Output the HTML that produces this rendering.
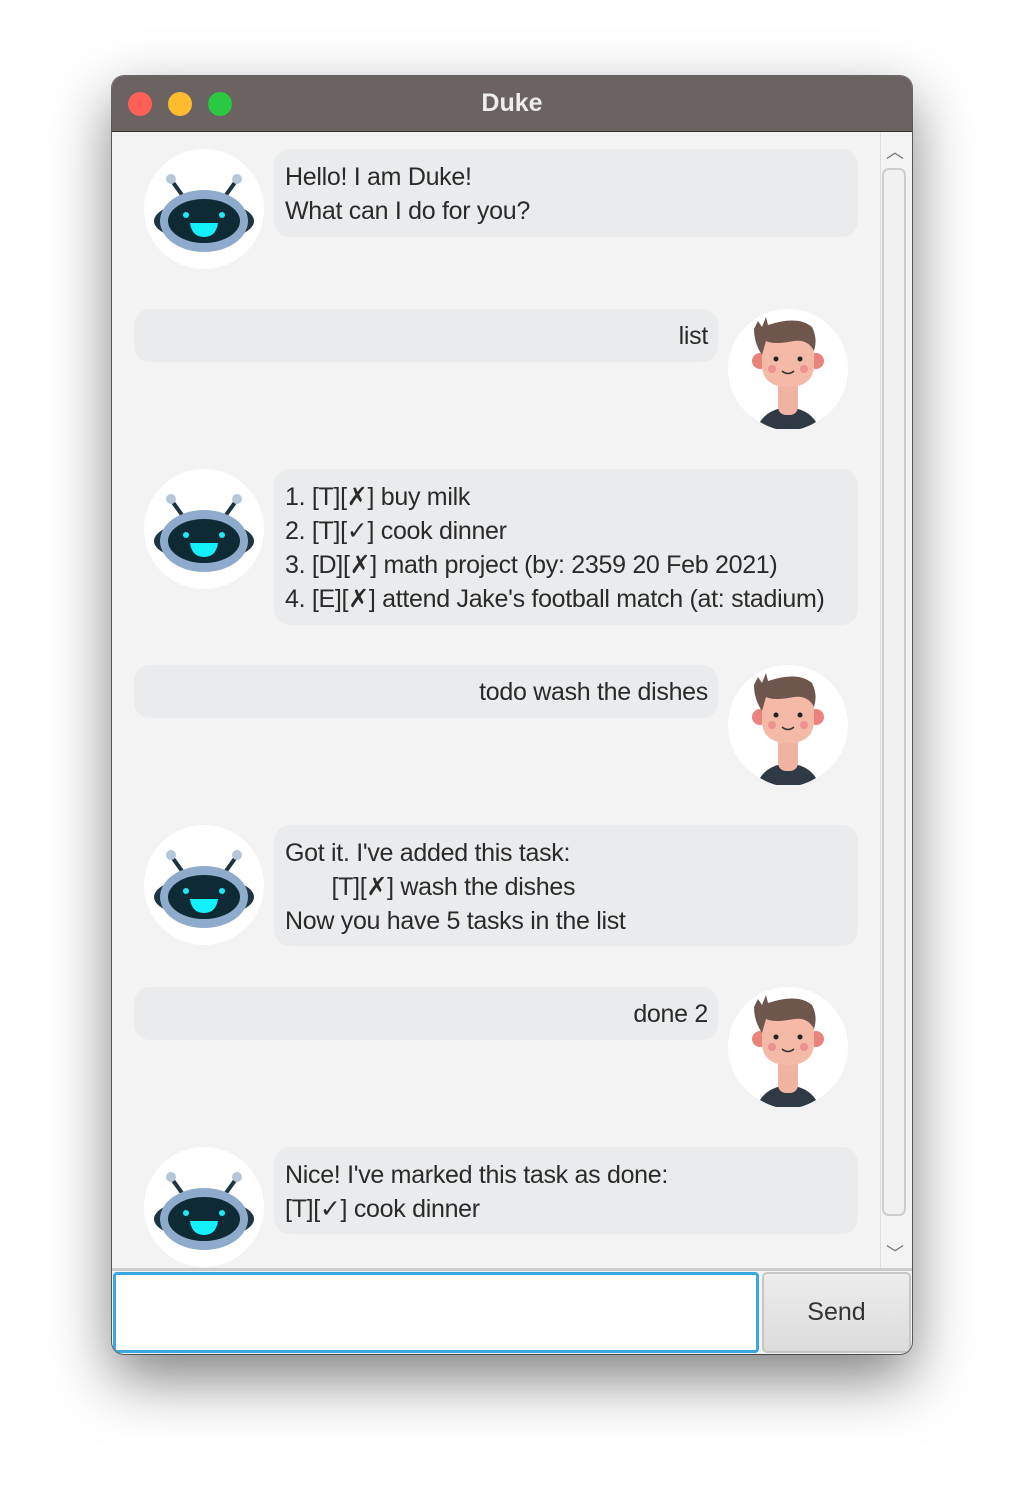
<!DOCTYPE html>
<html><head><meta charset="utf-8"><style>
*{margin:0;padding:0;box-sizing:border-box}
body{width:1024px;height:1502px;background:#fff;position:relative;overflow:hidden;font-family:"Liberation Sans",sans-serif}
.win{position:absolute;left:112px;top:76px;width:800px;height:1278px;border-radius:12px;overflow:hidden;background:#f3f3f3;box-shadow:0 24px 60px rgba(0,0,0,.5),0 0 0 1px rgba(0,0,0,.55)}
.tb{position:absolute;left:0;top:0;width:800px;height:56px;background:#6b6262;border-bottom:1px solid #333}
.dot{position:absolute;top:16px;width:24px;height:24px;border-radius:50%}
.title{position:absolute;left:0;right:0;top:13px;text-align:center;color:#eee;font-weight:bold;font-size:25px}
.b{position:absolute;background:#e9ebec;border-radius:16px;font-size:25px;line-height:34px;color:#2a2a2a;padding:11px 11px 9px;letter-spacing:-0.3px;white-space:nowrap}
.bot{left:162px;width:584px}
.usr{left:22px;width:584px;text-align:right;padding:10px 10px}
.av{position:absolute;width:120px;height:120px}
.sb{position:absolute;left:768px;top:56px;width:32px;height:1136px;background:#f3f3f3;border-left:1px solid #ddd}
.thumb{position:absolute;left:770px;top:92px;width:24px;height:1048px;border:2px solid #ccc;border-radius:7px;background:#f1f1f1}
.inp{position:absolute;left:1px;top:1196px;width:646px;height:81px;background:#fff;border:3px solid #3aa7e0;border-radius:4px}
.send{position:absolute;left:650px;top:1196px;width:149px;height:81px;background:linear-gradient(#ececec,#dcdcdc);border:2px solid #c6c6c6;border-radius:5px;font-size:25px;color:#333;text-align:center;line-height:77px}
.sep{position:absolute;left:0;top:1192px;width:800px;height:3px;background:#ccc}
</style></head><body>
<svg width="0" height="0" style="position:absolute">
<defs>
<symbol id="robot" viewBox="0 0 120 120">
<circle cx="60" cy="60" r="60" fill="#fff"/>
<line x1="28" y1="32" x2="38" y2="46" stroke="#1e3440" stroke-width="4"/>
<line x1="92" y1="32" x2="82" y2="46" stroke="#1e3440" stroke-width="4"/>
<circle cx="27" cy="30" r="5" fill="#b5c6d8"/><circle cx="93" cy="30" r="5" fill="#b5c6d8"/>
<ellipse cx="60" cy="72" rx="50" ry="20" fill="#1e3440"/>
<ellipse cx="60" cy="72" rx="44" ry="31" fill="#8eabcc"/>
<ellipse cx="60" cy="72" rx="36" ry="22" fill="#0d2a35"/>
<circle cx="42" cy="66" r="3" fill="#1de9f5"/><circle cx="78" cy="66" r="3" fill="#1de9f5"/>
<path d="M46 74 L74 74 Q72 88 60 88 Q48 88 46 74Z" fill="#12f0fb"/>
</symbol>
<symbol id="user" viewBox="0 0 120 120">
<circle cx="60" cy="60" r="60" fill="#fff"/>
<path d="M32 113 Q40 100 60 98 Q80 100 88 113 Q60 130 32 113Z" fill="#2f3a44"/>
<rect x="50" y="70" width="20" height="36" rx="8" fill="#f2b4a2"/>
<circle cx="32" cy="52" r="8" fill="#e8847c"/><circle cx="88" cy="52" r="8" fill="#e8847c"/>
<path d="M34 40 Q34 22 60 22 Q86 22 86 42 L86 58 Q84 78 60 78 Q36 78 34 58Z" fill="#f5b9a8"/>
<path d="M26 20 L30 12 L34 18 L38 8 L40 16 Q70 6 84 18 Q90 30 86 42 Q80 30 66 32 Q46 36 38 32 L34 46 Q26 34 26 20Z" fill="#6e564c"/>
<circle cx="48" cy="50" r="2.5" fill="#222"/><circle cx="72" cy="50" r="2.5" fill="#222"/>
<circle cx="44" cy="60" r="4" fill="#ec9090"/><circle cx="76" cy="60" r="4" fill="#ec9090"/>
<path d="M54 62 Q60 67 66 62" stroke="#333" stroke-width="1.5" fill="none"/>
</symbol>
</defs></svg>
<div class="win">
<div class="tb"><div class="dot" style="left:16px;background:#fe5f57"></div><div class="dot" style="left:56px;background:#febc2e"></div><div class="dot" style="left:96px;background:#28c840"></div><div class="title">Duke</div></div>

<svg class="av" style="left:32px;top:73px"><use href="#robot"/></svg>
<div class="b bot" style="top:73px;height:88px">Hello! I am Duke!<br>What can I do for you?</div>

<div class="b usr" style="top:233px;height:53px;padding-top:10px">list</div>
<svg class="av" style="left:616px;top:233px"><use href="#user"/></svg>

<svg class="av" style="left:32px;top:393px"><use href="#robot"/></svg>
<div class="b bot" style="top:393px;height:156px">1. [T][✗] buy milk<br>2. [T][✓] cook dinner<br>3. [D][✗] math project (by: 2359 20 Feb 2021)<br>4. [E][✗] attend Jake's football match (at: stadium)</div>

<div class="b usr" style="top:589px;height:53px;padding-top:10px">todo wash the dishes</div>
<svg class="av" style="left:616px;top:589px"><use href="#user"/></svg>

<svg class="av" style="left:32px;top:749px"><use href="#robot"/></svg>
<div class="b bot" style="top:749px;height:121px">Got it. I've added this task:<br>&nbsp;&nbsp;&nbsp;&nbsp;&nbsp;&nbsp;&nbsp;[T][✗] wash the dishes<br>Now you have 5 tasks in the list</div>

<div class="b usr" style="top:911px;height:53px;padding-top:10px">done 2</div>
<svg class="av" style="left:616px;top:911px"><use href="#user"/></svg>

<svg class="av" style="left:32px;top:1071px"><use href="#robot"/></svg>
<div class="b bot" style="top:1071px;height:87px">Nice! I've marked this task as done:<br>[T][✓] cook dinner</div>

<div class="sb"></div>
<div style="position:absolute;left:774px;top:62px;color:#777;font-size:18px">︿</div>
<div class="thumb"></div>
<div style="position:absolute;left:774px;top:1164px;color:#777;font-size:18px">﹀</div>
<div class="sep"></div>
<div class="inp"></div>
<div class="send">Send</div>
</div>
</body></html>
